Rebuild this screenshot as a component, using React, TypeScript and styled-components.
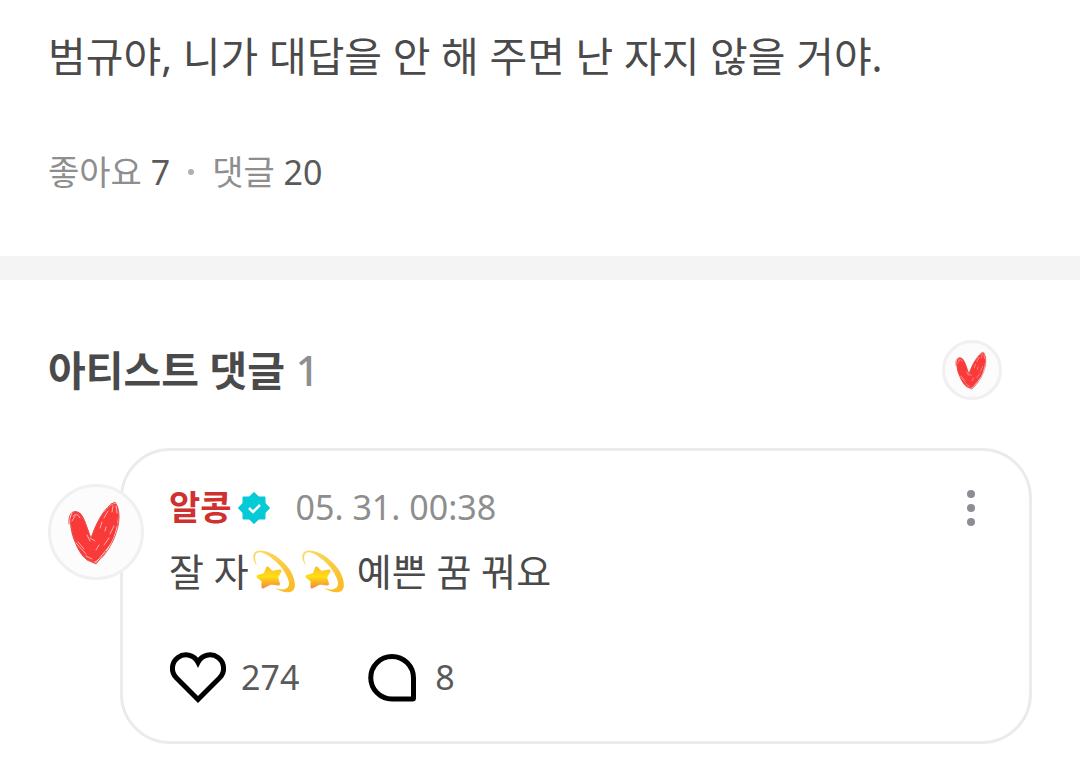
import React from "react";
import styled, { createGlobalStyle } from "styled-components";

const GlobalStyle = createGlobalStyle`
  * { box-sizing: border-box; }
  body {
    margin: 0;
    background: #fff;
    color: #4a4a4a;
    font-family: "Noto Sans", "Noto Sans CJK KR", sans-serif;
  }
  h2, p { margin: 0; }
  button {
    border: 0;
    padding: 0;
    background: none;
    font: inherit;
    color: inherit;
    cursor: pointer;
  }
`;

const Page = styled.main`
  width: 100%;
`;

const Post = styled.article`
  padding: 24px 48px 56px;
  border-bottom: 24px solid #f4f4f4;
`;

const PostText = styled.p`
  font-size: 41px;
  line-height: 64px;
`;

const Meta = styled.div`
  display: flex;
  align-items: center;
  margin-top: 56px;
  font-size: 34px;
  line-height: 56px;
  color: #8e8e8e;
`;

const MetaCount = styled.span`
  color: #5a5a5a;
`;

const Dot = styled.span`
  width: 6px;
  height: 6px;
  margin: 0 18px;
  border-radius: 50%;
  background: #b0b0b0;
`;

const Replies = styled.section`
  padding: 60px 48px 36px;
`;

const RepliesHeader = styled.header`
  display: flex;
  align-items: center;
  justify-content: space-between;
  padding-right: 30px;
`;

const Heading = styled.h2`
  font-size: 41px;
  font-weight: 700;
  line-height: 60px;
`;

const HeadingCount = styled.span`
  font-weight: 500;
  color: #8e8e8e;
`;

const Avatar = styled.span<{ $size: number }>`
  display: flex;
  flex: none;
  width: ${(p) => p.$size}px;
  height: ${(p) => p.$size}px;
  border: 3px solid #f0f0f0;
  border-radius: 50%;
  background: #fcfcfc;
  overflow: hidden;
  svg { width: 100%; height: 100%; }
`;

const Thread = styled.div`
  display: flex;
  align-items: flex-start;
  margin-top: 48px;
`;

const AvatarSlot = styled.div`
  z-index: 1;
  margin: 36px -24px 0 0;
`;

const Card = styled.article`
  flex: 1;
  padding: 32px 46px 36px;
  border: 3px solid #ebebef;
  border-radius: 50px;
`;

const CardHeader = styled.header`
  display: flex;
  align-items: center;
  height: 48px;
  font-size: 34px;
  line-height: 48px;
`;

const Name = styled.span`
  font-weight: 700;
  color: #d0312f;
`;

const Badge = styled.svg`
  width: 34px;
  height: 34px;
  margin: 0 25px 0 5px;
`;

const Time = styled.time`
  color: #8e8e8e;
`;

const MenuButton = styled.button`
  display: flex;
  margin-left: auto;
  svg { width: 24px; height: 40px; }
`;

const CommentText = styled.p`
  display: flex;
  align-items: center;
  margin-top: 8px;
  font-size: 38px;
  line-height: 64px;
  white-space: pre;
`;

const Emoji = styled.svg`
  width: 44px;
  height: 44px;
  margin: 0 2px 0 3px;
`;

const Actions = styled.div`
  display: flex;
  align-items: center;
  gap: 68px;
  margin-top: 46px;
`;

const Action = styled.button`
  display: flex;
  align-items: center;
  gap: 16px;
  font-size: 34px;
  line-height: 56px;
  color: #5a5a5a;
`;

const ActionIcon = styled.svg<{ $width: number }>`
  width: ${(p) => p.$width}px;
  height: 56px;
  overflow: visible;
  fill: none;
  stroke: #000;
  stroke-width: 5;
`;

const ScribbleHeart = () => (
  <svg viewBox="3 3 90 90" aria-hidden="true">
    <path
      d="M45 78 C37 77 31 69 27 59 C23 50 21 40 23 32 C25 26 30 26 34 31 C39 38 39 46 43 53 C46 45 50 35 57 27 C61 22 65 19 68 20 C72 24 70 34 69 41 C67 51 64 59 58 66 C53 71 50 78 45 78Z"
      fill="#f93a39"
    />
    <g fill="none" stroke="#e8504e" strokeWidth="1" strokeLinecap="round">
      <path d="M22 34 C24 50 28 64 39 76 L46 79 C55 76 65 60 69 46 C72 36 72 25 67 18 C56 23 49 38 44 52" />
      <path d="M21 40 C20 31 24 26 29 28 C35 32 40 45 42 52 M63 20 C68 16 73 28 69 43 M35 72 L48 80 L58 67" />
    </g>
    <g fill="none" stroke="#fff" strokeWidth="1" strokeLinecap="round" opacity=".6">
      <path d="M25 32 Q29 28 32 34 M24 37 L27 32 M28 59 L38 70 M30 58 L36 65 M38 72 L44 75 M39 51 L42 57 M42 54 L47 57 M65 22 L64 28 M68 22 L69 29 M60 27 L56 34 M54 38 L52 44 M66 42 L62 50 M61 54 L56 61 M51 61 L48 66 M58 43 L57 47" />
    </g>
  </svg>
);

const DizzyEmoji = ({ id }: { id: string }) => (
  <Emoji viewBox="0 0 44 44" role="img" aria-label="💫">
    <defs>
      <linearGradient id={id} x1="0" y1="0" x2="0" y2="1">
        <stop offset="0" stopColor="#fbc02a" />
        <stop offset=".45" stopColor="#ffdf12" />
        <stop offset="1" stopColor="#f58f3c" />
      </linearGradient>
      <linearGradient id={`${id}-trail`} x1="0" y1="0" x2="1" y2="1">
        <stop offset="0" stopColor="#fbdc6a" />
        <stop offset="1" stopColor="#fbb91f" />
      </linearGradient>
    </defs>
    <path
      d="M5 17 C0 10 0 4 5 2 C14 -1 29 8 38 21 C44 31 45 42 38 43 C33 44 28 42 23 39 C29 41 34 41 36 38 C39 34 35 26 29 18 C21 9 10 1 5 4 C2 6 3 12 5 17Z"
      fill={`url(#${id}-trail)`}
    />
    <path
      d="M15.5 19 L20 23.5 L28 22 L24.5 28.5 L26.5 35 L19 34 L11 38 L11 31.5 L6 27.5 L13 25.5Z"
      fill={`url(#${id})`}
      stroke={`url(#${id})`}
      strokeWidth="3"
      strokeLinejoin="round"
    />
  </Emoji>
);

export default function App() {
  return (
    <>
      <GlobalStyle />
      <Page>
        <Post>
          <PostText>범규야, 니가 대답을 안 해 주면 난 자지 않을 거야.</PostText>
          <Meta>
            <span>좋아요 <MetaCount>7</MetaCount></span>
            <Dot />
            <span>댓글 <MetaCount>20</MetaCount></span>
          </Meta>
        </Post>

        <Replies>
          <RepliesHeader>
            <Heading>아티스트 댓글 <HeadingCount>1</HeadingCount></Heading>
            <Avatar $size={60}><ScribbleHeart /></Avatar>
          </RepliesHeader>

          <Thread>
            <AvatarSlot>
              <Avatar $size={96}><ScribbleHeart /></Avatar>
            </AvatarSlot>
            <Card>
              <CardHeader>
                <Name>알콩</Name>
                <Badge viewBox="0 0 34 34" role="img" aria-label="인증됨">
                  <g fill="#06cbd7" stroke="#06cbd7" strokeWidth="2" strokeLinejoin="round">
                    <rect x="6.5" y="7.5" width="21" height="21" />
                    <rect x="6.5" y="7.5" width="21" height="21" transform="rotate(45 17 18)" />
                  </g>
                  <path d="M12 18l4 4 7-7" fill="none" stroke="#fff" strokeWidth="2.5" />
                </Badge>
                <Time>05. 31. 00:38</Time>
                <MenuButton aria-label="더보기">
                  <svg viewBox="0 0 24 40" fill="#8d8d95">
                    <circle cx="12" cy="7" r="4" />
                    <circle cx="12" cy="21" r="4" />
                    <circle cx="12" cy="35" r="4" />
                  </svg>
                </MenuButton>
              </CardHeader>
              <CommentText>
                <span>잘 자</span>
                <DizzyEmoji id="dizzy-one" />
                <DizzyEmoji id="dizzy-two" />
                <span> 예쁜 꿈 꿔요</span>
              </CommentText>
              <Actions>
                <Action aria-label="좋아요 274">
                  <ActionIcon $width={56} viewBox="0 0 56 56">
                    <path d="M29 50.5 L7.5 29 A13.5 13.5 0 1 1 29 13.3 A13.5 13.5 0 1 1 50.5 29Z" />
                  </ActionIcon>
                  <span>274</span>
                </Action>
                <Action aria-label="댓글 8">
                  <ActionIcon $width={52} viewBox="0 0 52 56">
                    <path d="M25 7.5 A21.5 21.5 0 0 1 46.5 29 V49 Q46.5 50 45.5 50 H25 A21.25 21.25 0 0 1 25 7.5Z" />
                  </ActionIcon>
                  <span>8</span>
                </Action>
              </Actions>
            </Card>
          </Thread>
        </Replies>
      </Page>
    </>
  );
}
